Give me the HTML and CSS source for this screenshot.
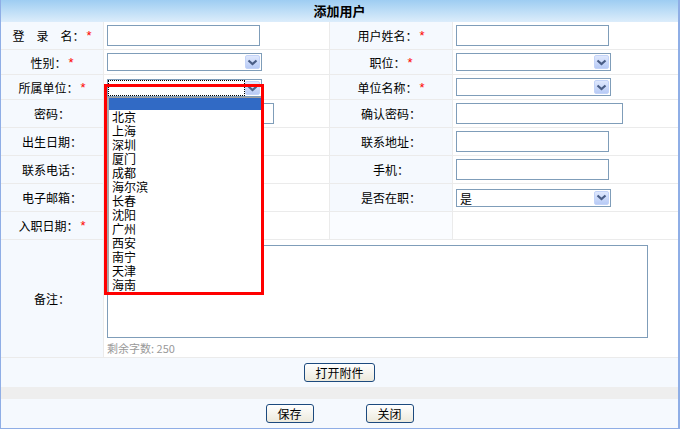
FILE: index.html
```html
<!DOCTYPE html>
<html lang="zh-CN">
<head>
    <meta charset="UTF-8">
    <title>添加用户</title>
    <link rel="stylesheet" href="styles.css">
</head>
<body>
    <div class="panel">
        <div class="panel-title">添加用户</div>

        <div class="form-grid">
            <!-- row 1 -->
            <div class="lbl">登　录　名：<span class="req">*</span></div>
            <div class="fld"><input class="txt" type="text"></div>
            <div class="lbl">用户姓名：<span class="req">*</span></div>
            <div class="fld last"><input class="txt" type="text"></div>

            <!-- row 2 -->
            <div class="lbl">性别：<span class="req">*</span></div>
            <div class="fld">
                <div class="sel"><select></select><span class="sel-btn"><svg width="11" height="7" viewBox="0 0 11 7"><polyline points="1.5,1.5 5.5,5 9.5,1.5" fill="none" stroke="#4a5e86" stroke-width="2.2"/></svg></span></div>
            </div>
            <div class="lbl">职位：<span class="req">*</span></div>
            <div class="fld last">
                <div class="sel"><select></select><span class="sel-btn"><svg width="11" height="7" viewBox="0 0 11 7"><polyline points="1.5,1.5 5.5,5 9.5,1.5" fill="none" stroke="#4a5e86" stroke-width="2.2"/></svg></span></div>
            </div>

            <!-- row 3 -->
            <div class="lbl">所属单位：<span class="req">*</span></div>
            <div class="fld unit-cell">
                <div class="sel focused"><select></select><span class="sel-btn"><svg width="11" height="7" viewBox="0 0 11 7"><polyline points="1.5,1.5 5.5,5 9.5,1.5" fill="none" stroke="#4a5e86" stroke-width="2.2"/></svg></span></div>
                <ul class="listbox">
                    <li class="picked"></li>
                    <li>北京</li>
                    <li>上海</li>
                    <li>深圳</li>
                    <li>厦门</li>
                    <li>成都</li>
                    <li>海尔滨</li>
                    <li>长春</li>
                    <li>沈阳</li>
                    <li>广州</li>
                    <li>西安</li>
                    <li>南宁</li>
                    <li>天津</li>
                    <li>海南</li>
                </ul>
                <div class="mark"></div>
            </div>
            <div class="lbl">单位名称：<span class="req">*</span></div>
            <div class="fld last">
                <div class="sel"><select></select><span class="sel-btn"><svg width="11" height="7" viewBox="0 0 11 7"><polyline points="1.5,1.5 5.5,5 9.5,1.5" fill="none" stroke="#4a5e86" stroke-width="2.2"/></svg></span></div>
            </div>

            <!-- row 4 -->
            <div class="lbl">密码：</div>
            <div class="fld"><input class="txt wide" type="password"></div>
            <div class="lbl">确认密码：</div>
            <div class="fld last"><input class="txt wide" type="password"></div>

            <!-- row 5 -->
            <div class="lbl">出生日期：</div>
            <div class="fld"><input class="txt" type="text"></div>
            <div class="lbl">联系地址：</div>
            <div class="fld last"><input class="txt" type="text"></div>

            <!-- row 6 -->
            <div class="lbl">联系电话：</div>
            <div class="fld"><input class="txt" type="text"></div>
            <div class="lbl">手机：</div>
            <div class="fld last"><input class="txt" type="text"></div>

            <!-- row 7 -->
            <div class="lbl">电子邮箱：</div>
            <div class="fld"><input class="txt" type="text"></div>
            <div class="lbl">是否在职：</div>
            <div class="fld last">
                <div class="sel"><select><option>是</option></select><span class="sel-btn"><svg width="11" height="7" viewBox="0 0 11 7"><polyline points="1.5,1.5 5.5,5 9.5,1.5" fill="none" stroke="#4a5e86" stroke-width="2.2"/></svg></span></div>
            </div>

            <!-- row 8 -->
            <div class="lbl">入职日期：<span class="req">*</span></div>
            <div class="fld"><input class="txt" type="text"></div>
            <div class="lbl blank"></div>
            <div class="fld last"></div>

            <!-- remarks -->
            <div class="lbl">备注：</div>
            <div class="fld last note-cell">
                <textarea class="note"></textarea>
                <div class="hint">剩余字数: 250</div>
            </div>
        </div>

        <div class="bar attach"><button class="btn">打开附件</button></div>
        <div class="sep"></div>
        <div class="bar actions">
            <button class="btn">保存</button>
            <button class="btn">关闭</button>
        </div>
    </div>
</body>
</html>
```

FILE: styles.css
```css
/* Basic Reset */
* {
    box-sizing: border-box;
    margin: 0;
    padding: 0;
}

body {
    font-family: "Noto Sans CJK SC", "Liberation Sans", sans-serif;
    font-size: 12px;
    color: #000;
    background: #fff;
}

/* Panel */
.panel {
    width: 680px;
    height: 429px;
    border-left: 1px solid #8faee6;
    border-right: 2px solid #8faee6;
    border-bottom: 1px solid #8faee6;
    background: #f5f9fe;
}

.panel-title {
    height: 22px;
    line-height: 22px;
    text-align: center;
    font-size: 13px;
    font-weight: bold;
    background: linear-gradient(#9ecdf2, #dcedfb);
}

/* Form grid */
.form-grid {
    display: grid;
    grid-template-columns: 103px 226px 123px 1fr;
    grid-template-rows: 28px 25px 25px 28px 28px 28px 28px 28px 118px;
}

.lbl, .fld {
    border-bottom: 1px solid #ebebeb;
    border-right: 1px solid #ebebeb;
}

.lbl {
    display: flex;
    align-items: center;
    justify-content: center;
    background: #f5f9fe;
    white-space: nowrap;
}

.lbl.blank {
    background: #fafcff;
}

.req {
    color: #f00;
    margin-left: 2px;
    font-family: "Liberation Sans", sans-serif;
    font-size: 13px;
}

.fld {
    display: flex;
    align-items: center;
    padding-left: 3px;
    background: #fff;
}

.fld.last {
    border-right: none;
}

/* Inputs */
.txt {
    width: 153px;
    height: 21px;
    border: 1px solid #7f9db9;
    background: #fff;
    font: inherit;
}

.txt.wide {
    width: 167px;
}

.sel {
    display: flex;
    width: 155px;
    height: 18px;
    border: 1px solid #7f9db9;
    background: #fff;
}

.sel select {
    flex: 1;
    min-width: 0;
    border: none;
    background: #fff;
    appearance: none;
    -webkit-appearance: none;
    font: inherit;
    font-size: 12px;
    padding-left: 3px;
    outline: none;
}

.sel.focused select {
    outline: 1px dotted #000;
    outline-offset: -1px;
}

.sel-btn {
    width: 15px;
    height: 14px;
    margin: 1px 1px 1px 0;
    display: flex;
    align-items: center;
    justify-content: center;
    background: linear-gradient(#dfe8fd, #b8cbf6);
    border: 1px solid #c3d3f8;
    border-radius: 2px;
}

/* Open dropdown list */
.unit-cell {
    position: relative;
    align-items: flex-start;
    padding-top: 4px;
}

.listbox {
    position: absolute;
    left: 3px;
    top: 22px;
    width: 155px;
    list-style: none;
    background: #fff;
    border-top: 1px solid #a0a0a0;
    border-left: 2px solid #a8a8a8;
    border-right: 1px solid #000;
    border-bottom: 1px solid #000;
    z-index: 5;
}

.listbox li {
    height: 14px;
    line-height: 14px;
    padding-left: 3px;
    font-size: 12px;
}

.listbox li.picked {
    height: 12px;
    background: #316ac5;
}

.mark {
    position: absolute;
    left: 0;
    top: 9px;
    width: 160px;
    height: 211px;
    border: 3px solid #f00;
    z-index: 6;
}

/* Remarks */
.note-cell {
    grid-column: 2 / 5;
    flex-direction: column;
    align-items: flex-start;
    padding-top: 5px;
}

.note {
    width: 541px;
    height: 93px;
    border: 1px solid #7f9db9;
    resize: none;
}

.hint {
    margin-top: 3px;
    color: #999;
    font-size: 11px;
    line-height: 14px;
}

/* Bottom bars */
.bar {
    display: flex;
    align-items: center;
    justify-content: center;
}

.attach {
    height: 29px;
}

.sep {
    height: 12px;
    background: #eeeeee;
}

.actions {
    height: 28px;
    gap: 52px;
}

.btn {
    height: 19px;
    padding: 0 8px;
    border: 1px solid #1c4a7e;
    border-radius: 3px;
    background: linear-gradient(#ffffff, #ece9dc);
    font: inherit;
    font-size: 12px;
    line-height: 17px;
    color: #000;
}

.attach .btn {
    width: 71px;
}

.actions .btn {
    width: 48px;
}
```
